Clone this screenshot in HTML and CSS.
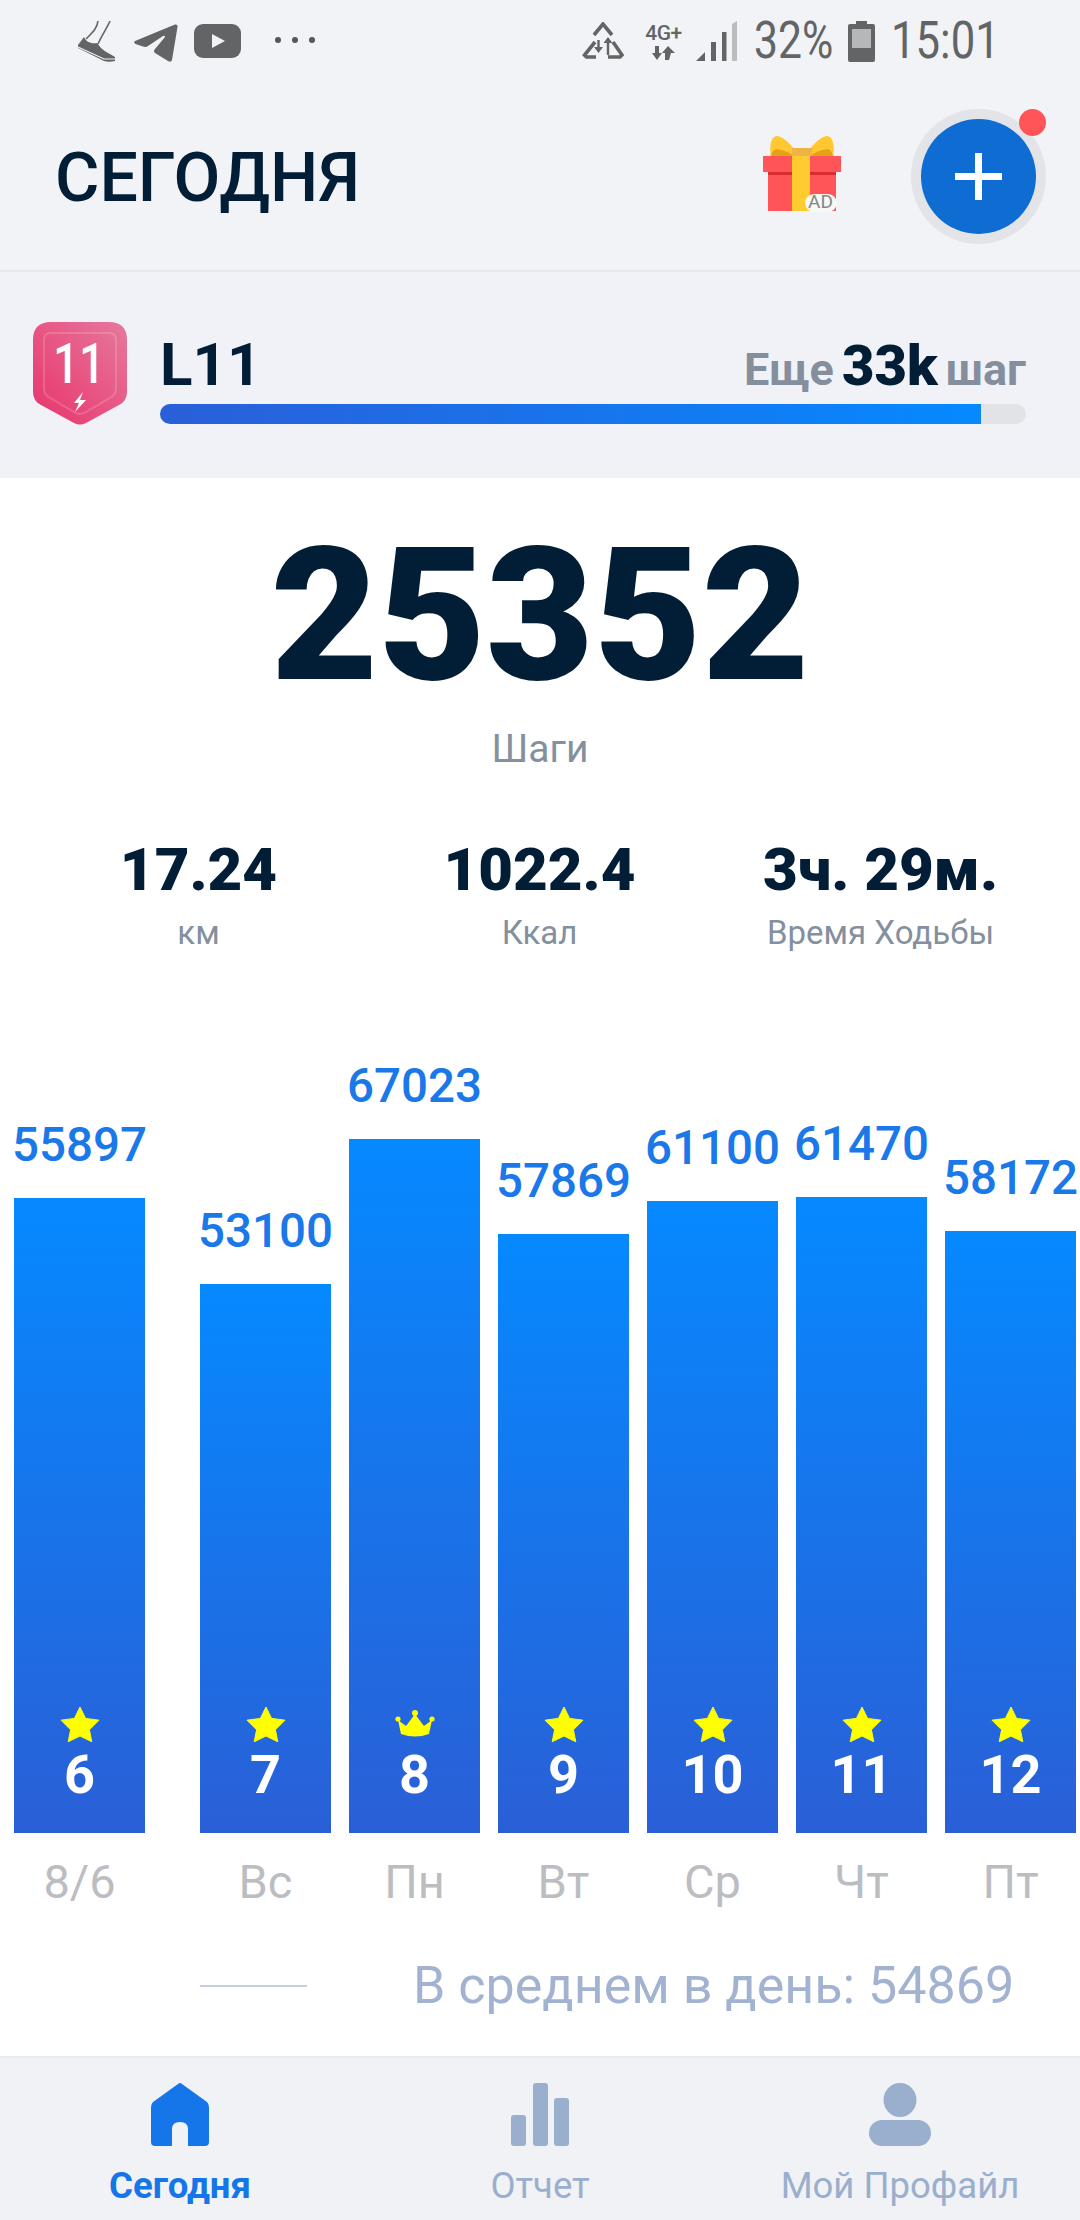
FILE: index.html
```html
<!DOCTYPE html>
<html lang="ru">
<head>
  <meta charset="utf-8" />
  <title>Сегодня</title>
  <link rel="stylesheet" href="styles.css">
</head>
<body>
  <svg class="defs" width="0" height="0">
    <symbol id="star" viewBox="0 0 40 36"><path d="M20 1l5.600 11.400 13.400 1.800-9.600 9.600 2.400 12-11.800-5.800-11.800 5.800 2.400-12-9.600-9.600 13.400-1.800z" fill="#ffff00" stroke="#ffff00" stroke-linejoin="round"/></symbol>
    <symbol id="crown" viewBox="0 0 40 28"><path d="M3 10l8 6 9-12 9 12 8-6-3 14q-14 5-28 0z" fill="#ffff00"/><circle cx="20" cy="3" r="3" fill="#ffff00"/><circle cx="3" cy="9" r="2.600" fill="#ffff00"/><circle cx="37" cy="9" r="2.600" fill="#ffff00"/></symbol>
  </svg>

  <div class="phone">
    <!-- статус бар -->
    <div class="status">
      <svg class="st-shoe" width="38" height="41" viewBox="0 0 38 41">
        <path d="M21 0c-1 8-6 12-12 18M33 0c-3 7-8 14-12 23" fill="none" stroke="#636466" stroke-width="1.600"/>
        <path d="M1 24l6-8c2 5 7 7 13 6l4 5c4 4 10 6 14 9v4c-4 1-8 1-11 0L1 27z" fill="#636466"/>
        <path d="M1 26l26 12h11" fill="none" stroke="#f1f3f7" stroke-width="1.200"/>
      </svg>
      <svg class="st-tg" width="44" height="38" viewBox="0 0 44 38">
        <path d="M1 17L41 .5q3-.5 2.500 2.500L38 36q-1 3-4 1l-13-8q-2-2 0-4l10-12q0-2-2-1L14 22q-2 1.500-5 .5L1.500 20q-2.500-1.500-.5-3z" fill="#636466"/>
      </svg>
      <svg class="st-yt" width="47" height="34" viewBox="0 0 47 34">
        <rect width="47" height="34" rx="9" fill="#636466"/>
        <path d="M18 10l13 7-13 7z" fill="#f1f3f7"/>
      </svg>
      <div class="st-dots"><i></i><i></i><i></i></div>

      <svg class="st-rec" width="42" height="38" viewBox="0 0 42 38">
        <g fill="none" stroke="#636466" stroke-width="3.600">
          <path d="M12 13l9-11 9 11"/>
          <path d="M13 20L2.500 33l2 2H14M31 20l9 13-2 2H26"/>
          <path d="M16.500 18v10M26 33V19" stroke-width="2.400"/>
        </g>
        <path d="M12 25h9l-4.500 6zM21.500 21h9L26 15z" fill="#636466"/>
      </svg>
      <div class="st-net">
        <span class="st-4g">4G+</span>
        <svg width="24" height="14" viewBox="0 0 24 14"><path d="M3 0h4v7h3l-5 7-5-7h3zM17 14h-4V7h-3l6-7 7 7h-4z" fill="#636466"/></svg>
      </div>
      <svg class="st-sig" width="41" height="40" viewBox="0 0 41 40">
        <path d="M0 40l9-9v9zM15 21h5v19h-5zM26 11h4.500v29H26z" fill="#636466"/>
        <path d="M36 3l5-3v40h-5z" fill="#bcbdbf"/>
      </svg>
      <span class="st-text st-pct">32%</span>
      <svg class="st-bat" width="27" height="41" viewBox="0 0 27 41">
        <path d="M8 0h11v3h6q2 0 2 2v34q0 2-2 2H2q-2 0-2-2V5q0-2 2-2h6z" fill="#636466"/>
        <rect x="4" y="8" width="19" height="19" fill="#b6b7b8"/>
      </svg>
      <span class="st-text st-time">15:01</span>
    </div>

    <!-- шапка -->
    <header class="head">
      <h1 class="title">СЕГОДНЯ</h1>
      <div class="gift">
        <svg width="78" height="76" viewBox="0 0 78 76">
          <path d="M38 22C30 10 20 0 14 0 8 0 6 10 8 22z" fill="#ffc830"/>
          <path d="M40 22C48 10 58 0 64 0c6 0 8 10 6 22z" fill="#ffc830"/>
          <path d="M8 22q0-7 5-9 12 1 20 9zM70 22q0-7-5-9-12 1-20 9z" fill="#e6a11a"/>
          <rect x="29" y="12" width="20" height="10" fill="#eeb347"/>
          <rect x="5" y="36" width="68" height="39" fill="#ff5558"/>
          <rect x="5" y="36" width="68" height="3" fill="#d92c32"/>
          <rect y="20" width="78" height="16" fill="#ff5558"/>
          <rect x="29" y="20" width="18" height="55" fill="#ffcb2f"/>
          <rect x="42" y="58" width="32" height="18" rx="9" fill="#f8f8f4"/>
        </svg>
        <span class="gift-ad">AD</span>
      </div>
      <button type="button" class="add">
        <span class="add-inner"><i class="plus-h"></i><i class="plus-v"></i></span>
        <span class="add-dot"></span>
      </button>
    </header>

    <!-- уровень -->
    <section class="level">
      <svg class="badge" width="94" height="103" viewBox="0 0 94 103">
        <defs>
          <linearGradient id="badgeGrad" x1="0" y1="1" x2="1" y2="0">
            <stop offset="0" stop-color="#e8336b"/>
            <stop offset="1" stop-color="#e6799d"/>
          </linearGradient>
        </defs>
        <path d="M18 0h58q18 0 18 18v52q0 9-8 13l-33 18q-6 3-12 0L8 83q-8-4-8-13V18Q0 0 18 0z" fill="url(#badgeGrad)"/>
        <path d="M18 11h58q7 0 7 7v48q0 7-6 10L51 91q-4 2-8 0L17 76q-6-3-6-10V18q0-7 7-7z" fill="none" stroke="#ffffff" stroke-opacity=".16" stroke-width="2"/>
        <text class="badge-num" transform="translate(46 61) scale(.82 1)">11</text>
        <path d="M50 70l-9 11h5l-4 9 11-12h-6z" fill="#ffffff"/>
      </svg>
      <div class="level-main">
        <div class="level-row">
          <span class="level-name">L11</span>
          <span class="level-left">Еще <b>33k</b> шаг</span>
        </div>
        <div class="track"><div class="fill"></div></div>
      </div>
    </section>

    <main class="content">
      <div class="steps">25352</div>
      <div class="steps-label">Шаги</div>

      <div class="stats">
        <div class="stat"><div class="stat-val">17.24</div><div class="stat-label">км</div></div>
        <div class="stat"><div class="stat-val">1022.4</div><div class="stat-label">Ккал</div></div>
        <div class="stat"><div class="stat-val">3ч. 29м.</div><div class="stat-label">Время Ходьбы</div></div>
      </div>

      <div class="chart">
        <div class="col col-first">
          <div class="val">55897</div>
          <div class="bar" style="height:635px"><svg class="ico"><use href="#star"/></svg><div class="num">6</div></div>
          <div class="day">8/6</div>
        </div>
        <div class="col">
          <div class="val">53100</div>
          <div class="bar" style="height:549px"><svg class="ico"><use href="#star"/></svg><div class="num">7</div></div>
          <div class="day">Вс</div>
        </div>
        <div class="col">
          <div class="val">67023</div>
          <div class="bar" style="height:694px"><svg class="ico"><use href="#crown"/></svg><div class="num">8</div></div>
          <div class="day">Пн</div>
        </div>
        <div class="col">
          <div class="val">57869</div>
          <div class="bar" style="height:599px"><svg class="ico"><use href="#star"/></svg><div class="num">9</div></div>
          <div class="day">Вт</div>
        </div>
        <div class="col">
          <div class="val">61100</div>
          <div class="bar" style="height:632px"><svg class="ico"><use href="#star"/></svg><div class="num">10</div></div>
          <div class="day">Ср</div>
        </div>
        <div class="col">
          <div class="val">61470</div>
          <div class="bar" style="height:636px"><svg class="ico"><use href="#star"/></svg><div class="num">11</div></div>
          <div class="day">Чт</div>
        </div>
        <div class="col">
          <div class="val">58172</div>
          <div class="bar" style="height:602px"><svg class="ico"><use href="#star"/></svg><div class="num">12</div></div>
          <div class="day">Пт</div>
        </div>
      </div>

      <div class="avg">
        <span class="avg-line"></span>
        <span class="avg-text">В среднем в день: 54869</span>
      </div>
    </main>

    <!-- нижнее меню -->
    <nav class="nav">
      <div class="tab tab-on">
        <svg width="58" height="63" viewBox="0 0 58 63"><path d="M27 1q2-2 4 0l25 18q2 2 2 5v35q0 4-4 4H37V46q0-7-8-7t-8 7v17H4q-4 0-4-4V24q0-3 2-5z" fill="#1476e8"/></svg>
        <span>Сегодня</span>
      </div>
      <div class="tab">
        <svg width="58" height="63" viewBox="0 0 58 63"><rect x="0" y="32" width="15" height="31" rx="3" fill="#9aaecd"/><rect x="22" y="0" width="15" height="63" rx="3" fill="#9aaecd"/><rect x="43" y="15" width="15" height="48" rx="3" fill="#9aaecd"/></svg>
        <span>Отчет</span>
      </div>
      <div class="tab">
        <svg width="62" height="63" viewBox="0 0 62 63"><ellipse cx="31" cy="17" rx="16.500" ry="17" fill="#9aaecd"/><rect x="0" y="37" width="62" height="26" rx="13" fill="#9aaecd"/></svg>
        <span>Мой Профайл</span>
      </div>
    </nav>
  </div>
</body>
</html>
```

FILE: styles.css
```css
*{box-sizing:border-box;font-family:Roboto,"Noto Sans",sans-serif;}
body{margin:0;background:#fff;}
.defs{position:absolute;}
.phone{width:1080px;height:2220px;display:flex;flex-direction:column;background:#f1f3f7;overflow:hidden;}

/* status bar */
.status{display:flex;align-items:center;height:82px;padding-left:77px;flex:none;}
.st-tg{margin-left:19px;margin-top:3px;}
.st-yt{margin-left:16px;}
.st-dots{display:flex;gap:11px;margin-left:34px;width:40px;margin-top:-2px;}
.st-dots i{width:6px;height:6px;border-radius:50%;background:#55565a;}
.st-rec{margin-left:auto;}
.st-net{display:flex;flex-direction:column;align-items:center;width:41px;margin-left:19px;}
.st-4g{font-size:21px;line-height:21px;font-weight:500;color:#636466;letter-spacing:-.5px;}
.st-net svg{margin-top:2px;}
.st-sig{margin-left:12px;}
.st-text{display:inline-block;font-size:52px;line-height:52px;font-weight:400;color:#636466;transform-origin:left center;white-space:nowrap;}
.st-pct{width:79px;margin-left:17px;transform:scaleX(.82);}
.st-bat{margin-left:15px;}
.st-time{width:109px;margin-left:16px;margin-right:80px;transform:scaleX(.84);}

/* header */
.head{display:flex;align-items:center;height:190px;flex:none;padding-left:55px;border-bottom:2px solid #e6e8ec;}
.title{margin:4px 0 0;font-size:68px;font-weight:500;color:#021d36;line-height:80px;}
.gift{position:relative;width:78px;height:76px;margin-left:auto;margin-top:-4px;}
.gift svg{display:block;}
.gift-ad{position:absolute;left:45px;top:55px;font-size:19px;line-height:22px;color:#85878a;}
.add{position:relative;width:135px;height:135px;margin-left:70px;margin-right:34px;padding:0;border:none;border-radius:50%;background:#e2e4e8;}
.add-inner{position:absolute;left:10px;top:10px;width:115px;height:115px;border-radius:50%;background:#0e6cd3;}
.plus-h{position:absolute;left:34px;top:54px;width:47px;height:7px;background:#fff;}
.plus-v{position:absolute;left:54px;top:34px;width:7px;height:47px;background:#fff;}
.add-dot{position:absolute;right:0;top:0;width:27px;height:27px;border-radius:50%;background:#ff5558;}

/* level */
.level{display:flex;height:206px;flex:none;padding:50px 54px 0 33px;background:#f0f2f7;}
.badge{flex:none;}
.badge-num{font-size:56px;font-weight:500;fill:#fff;text-anchor:middle;}
.level-main{flex:1;margin-left:33px;}
.level-row{display:flex;justify-content:space-between;align-items:baseline;height:82px;padding-top:3px;color:#848e9c;}
.level-name{font-size:60px;line-height:80px;font-weight:700;color:#021d36;}
.level-left{font-size:45px;font-weight:700;white-space:nowrap;word-spacing:-3px;}
.level-left b{font-size:56px;color:#021d36;}
.track{height:20px;border-radius:10px;background:#e2e3e6;overflow:hidden;}
.fill{width:821px;height:20px;background:linear-gradient(90deg,#2a5fd9,#0689ff);}

/* main */
.content{flex:1;background:#fff;}
.steps{margin-top:44px;text-align:center;font-size:186px;line-height:186px;font-weight:900;color:#021d36;}
.steps-label{margin-top:19px;text-align:center;font-size:39px;line-height:44px;color:#84909e;}
.stats{display:grid;grid-template-columns:repeat(3,341px);padding:0 28px;margin-top:64px;}
.stat{text-align:center;}
.stat-val{font-size:60px;line-height:70px;font-weight:900;color:#021d36;white-space:nowrap;}
.stat-label{margin-top:8px;font-size:33px;line-height:40px;color:#84909e;white-space:nowrap;}

/* chart */
.chart{display:flex;align-items:flex-end;gap:18px;height:957px;padding-left:14px;}
.col{display:flex;flex-direction:column;align-items:center;width:131px;}
.col-first{margin-right:37px;}
.val{font-size:47.500px;line-height:56px;font-weight:500;color:#1a78e8;margin-bottom:25px;}
.bar{display:flex;flex-direction:column;align-items:center;justify-content:flex-end;width:131px;padding-bottom:31px;background:linear-gradient(180deg,#0689ff,#2a5fd6);}
.ico{width:40px;height:36px;}
.num{margin-top:6px;font-size:54px;line-height:54px;font-weight:700;color:#fff;}
.day{margin-top:21px;font-size:47px;line-height:56px;color:#bcbdc1;}

/* average */
.avg{display:flex;align-items:center;padding-left:200px;margin-top:46px;}
.avg-line{width:107px;height:2px;background:#c3cede;}
.avg-text{margin-left:106px;font-size:52px;line-height:60px;color:#a2b3d1;white-space:nowrap;}

/* bottom nav */
.nav{display:grid;grid-template-columns:repeat(3,360px);height:164px;flex:none;padding-top:25px;background:#f0f2f5;border-top:2px solid #e8eaf2;}
.tab{display:flex;flex-direction:column;align-items:center;color:#9aaecd;font-size:36.500px;line-height:44px;}
.tab span{margin-top:18px;white-space:nowrap;}
.tab-on{color:#1476e8;font-weight:700;}
```
